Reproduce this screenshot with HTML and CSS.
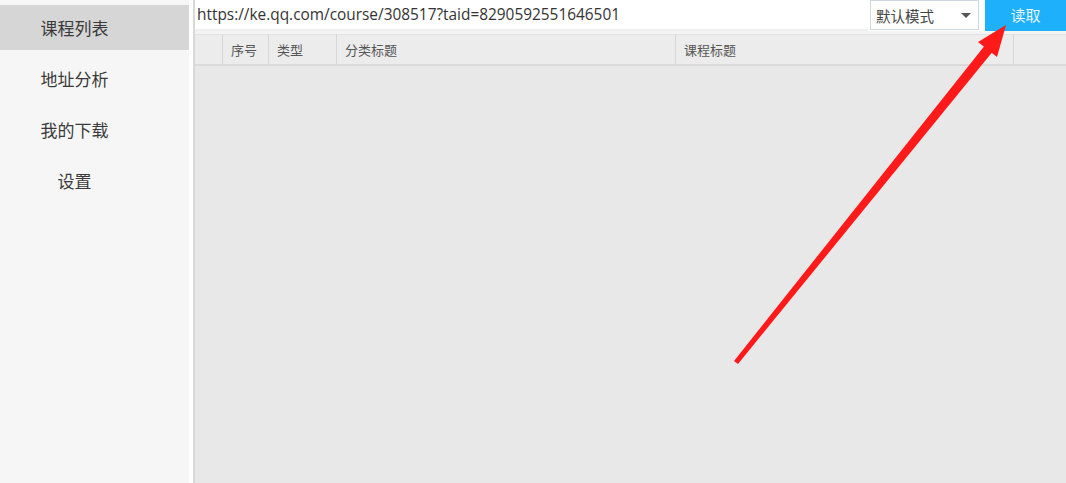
FILE: index.html
```html
<!DOCTYPE html>
<html lang="zh">
<head>
<meta charset="UTF-8">
<title>课程列表</title>
<link rel="stylesheet" href="styles.css">
</head>
<body>
  <div class="app">
    <div class="sidebar">
      <div class="nav-item active">课程列表</div>
      <div class="nav-item">地址分析</div>
      <div class="nav-item">我的下载</div>
      <div class="nav-item">设置</div>
    </div>
    <div class="main">
      <div class="toolbar">
        <div class="url-input">https://ke.qq.com/course/308517?taid=8290592551646501</div>
        <div class="mode-select">
          <span>默认模式</span>
          <span class="caret"></span>
        </div>
        <div class="read-btn">读取</div>
      </div>
      <div class="table">
        <div class="thead">
          <div class="th col-check"></div>
          <div class="th col-no">序号</div>
          <div class="th col-type">类型</div>
          <div class="th col-cat">分类标题</div>
          <div class="th col-title">课程标题</div>
          <div class="th col-rest"></div>
        </div>
        <div class="tbody"></div>
      </div>
    </div>
  </div>

  <svg class="arrow" width="1066" height="483" viewBox="0 0 1066 483">
    <polygon fill="#ff1a1a" points="734,361 738,364 994,50 986,44" />
    <polygon fill="#ff1a1a" points="1006,25 978,42 997,57" />
  </svg>
</body>
</html>
```

FILE: styles.css
```css
html, body {
  margin: 0;
  padding: 0;
}

body {
  width: 1066px;
  height: 483px;
  overflow: hidden;
  position: relative;
  background: #fff;
  font-family: "Noto Sans CJK SC", "Noto Sans", sans-serif;
  color: #333;
}

.app {
  display: flex;
  height: 100%;
}

.sidebar {
  width: 189px;
  background: #f6f6f6;
  padding-top: 5px;
  display: flex;
  flex-direction: column;
  gap: 6px;
}

.nav-item {
  height: 45px;
  line-height: 45px;
  font-size: 17px;
  text-align: center;
  padding-right: 40px;
  color: #3a3a3a;
}

.nav-item.active {
  background: #d6d6d6;
}

.main {
  flex: 1;
  margin-left: 4px;
  display: flex;
  flex-direction: column;
  border-left: 2px solid #d9d9d9;
  background: #f4f4f4;
}

.toolbar {
  display: flex;
  height: 31px;
  background: #fff;
}

.url-input {
  flex: 1;
  padding-left: 2px;
  font-family: "Open Sans", "Noto Sans", sans-serif;
  font-size: 15.4px;
  line-height: 29px;
  color: #333;
  border-bottom: 2px solid #f0f0f0;
}

.mode-select {
  width: 109px;
  margin-left: 2px;
  border: 1px solid #cfd8e0;
  box-sizing: border-box;
  height: 30px;
  display: flex;
  align-items: center;
  justify-content: space-between;
  padding: 0 7px 0 5px;
  font-size: 14.5px;
  color: #444;
}

.caret {
  width: 0;
  height: 0;
  border-left: 5px solid transparent;
  border-right: 5px solid transparent;
  border-top: 5px solid #555;
}

.read-btn {
  width: 81px;
  margin-left: 6px;
  background: #1fb0fb;
  color: #e4f5ff;
  font-size: 15px;
  text-align: center;
  line-height: 29px;
}

.table {
  flex: 1;
  display: flex;
  flex-direction: column;
  margin-top: 3px;
  border-top: 1px solid #e2e2e2;
}

.thead {
  display: flex;
  height: 29px;
  background: #ececec;
  border-bottom: 2px solid #dadada;
  font-size: 13px;
  color: #555;
}

.th {
  line-height: 29px;
  padding-left: 8px;
  box-sizing: border-box;
  border-right: 1px solid #d6d6d6;
}

.col-check { width: 28px; }
.col-no { width: 46px; }
.col-type { width: 68px; }
.col-cat { width: 339px; }
.col-title { width: 338px; }
.col-rest { flex: 1; border-right: none; }

.tbody {
  flex: 1;
  background: #e8e8e8;
}

.arrow {
  position: absolute;
  top: 0;
  left: 0;
  pointer-events: none;
}
```
